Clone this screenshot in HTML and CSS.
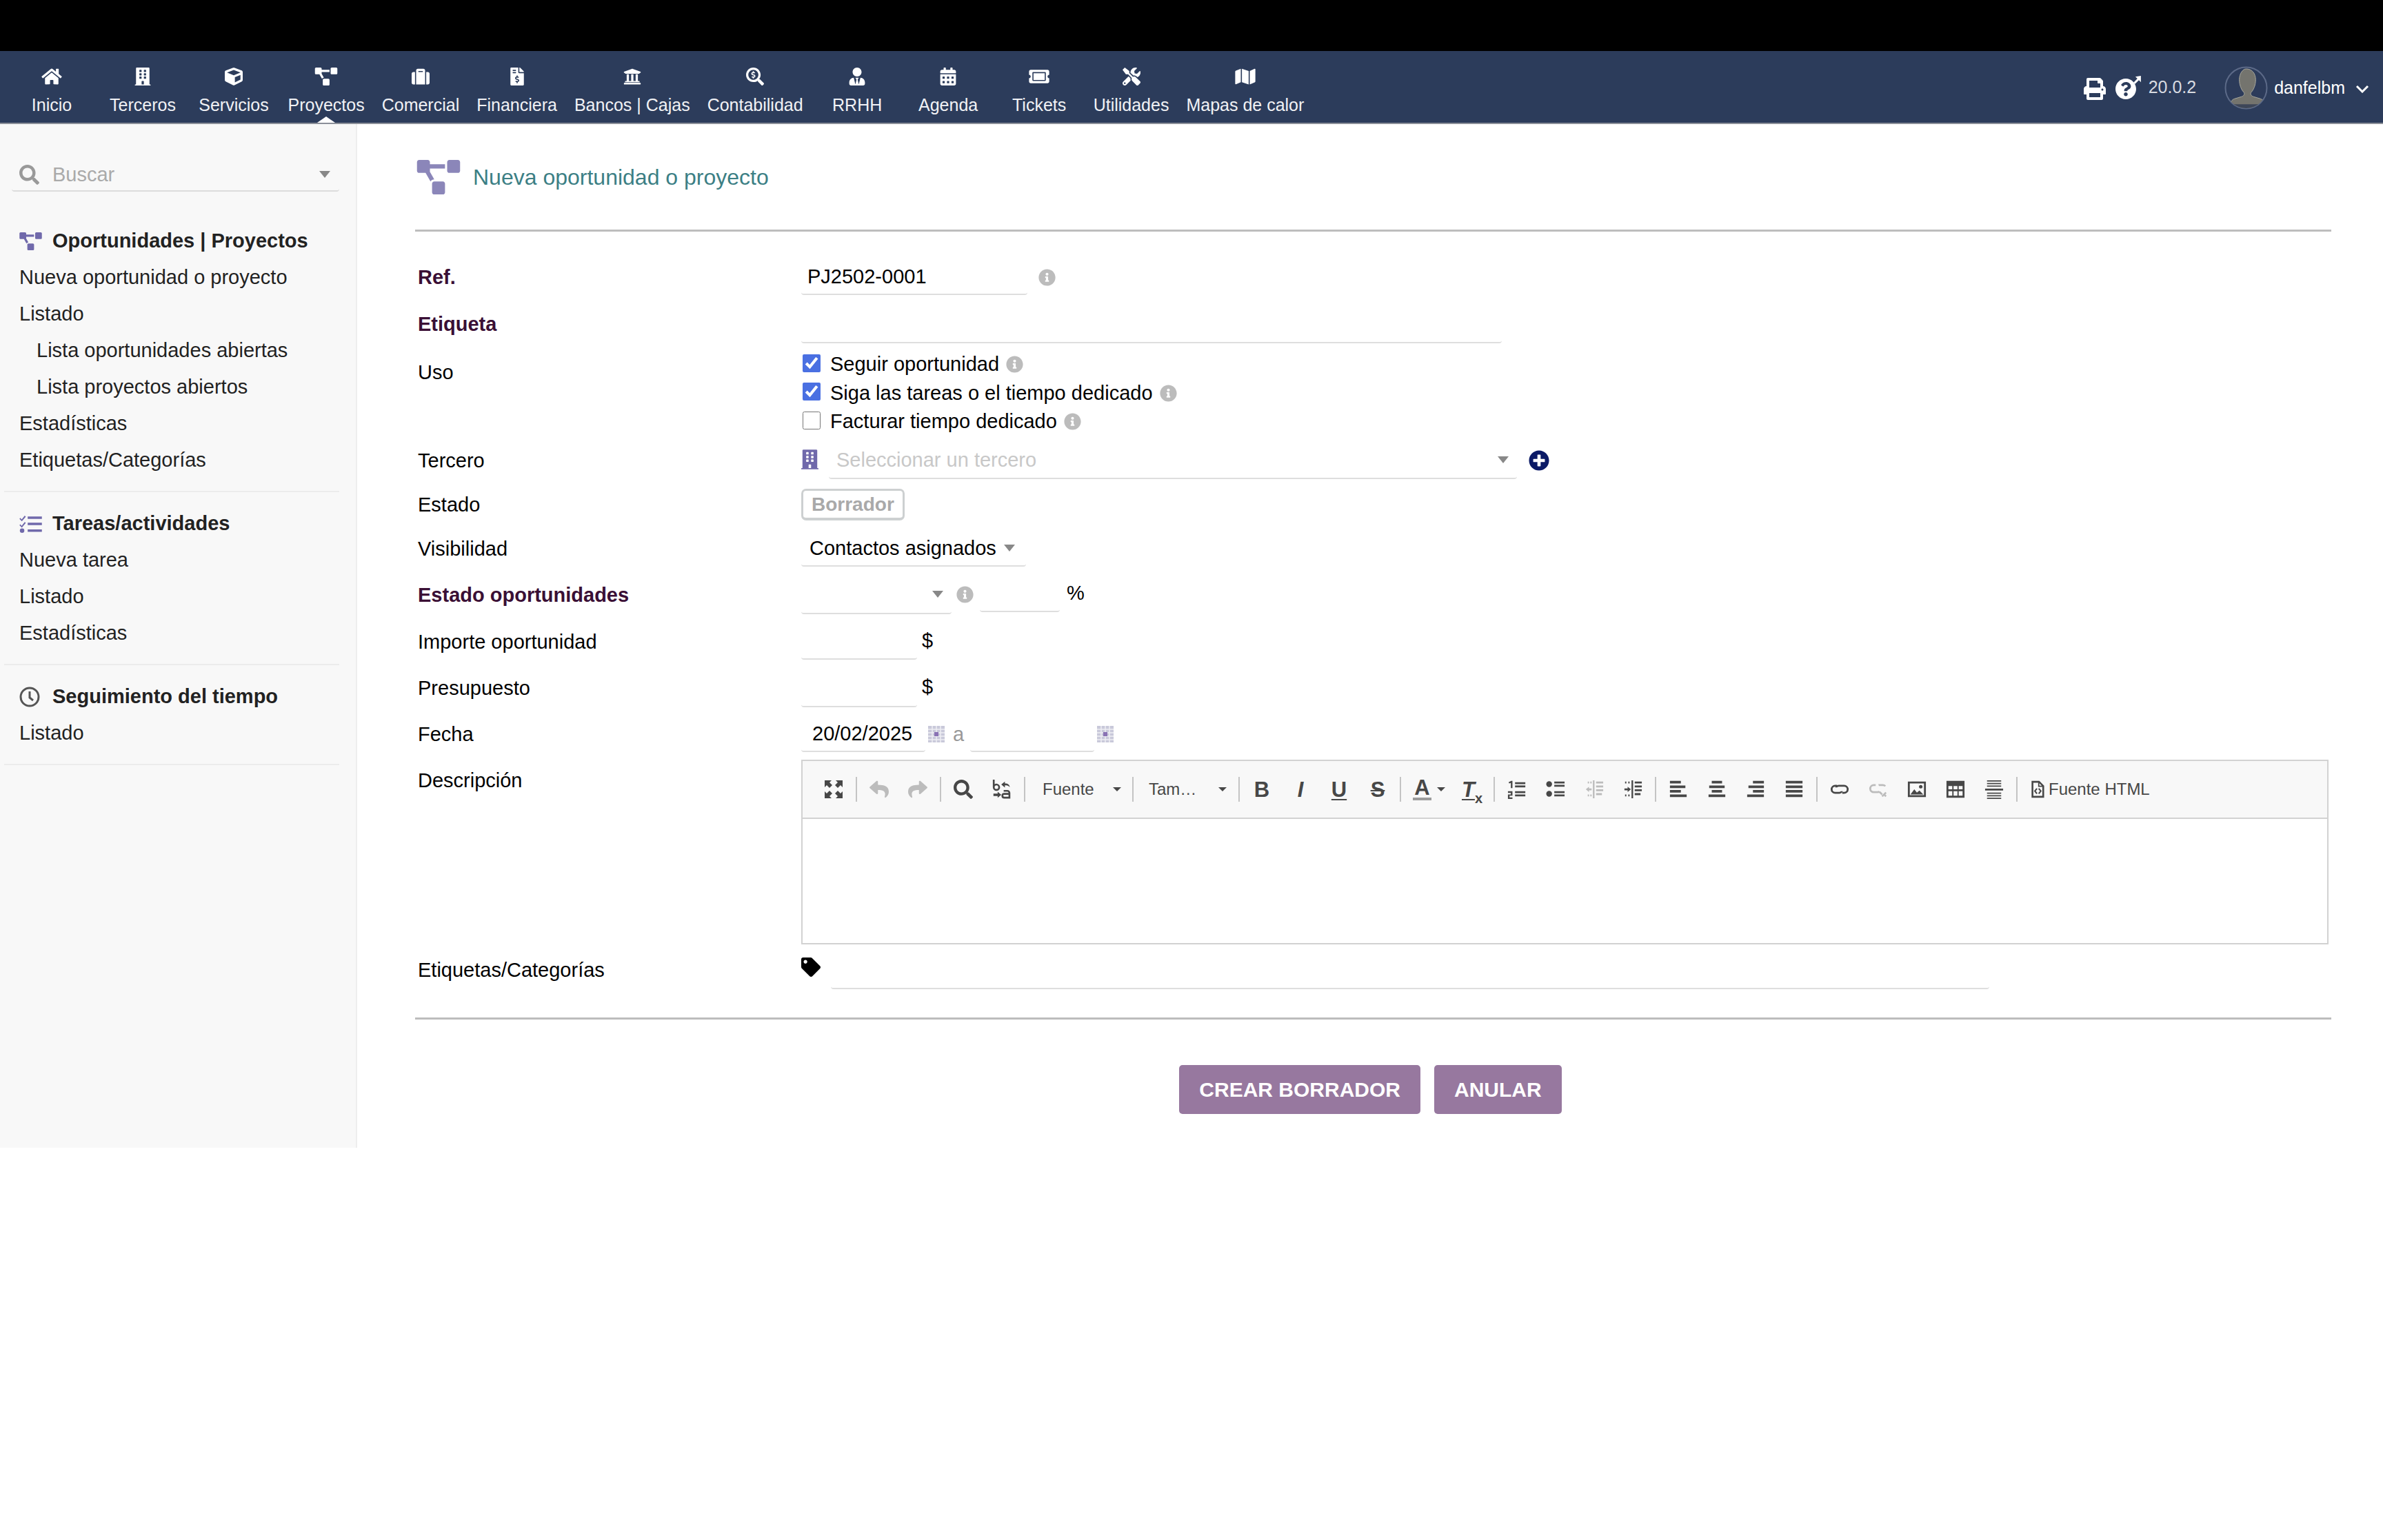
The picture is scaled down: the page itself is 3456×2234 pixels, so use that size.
FILE: index.html
```html
<!DOCTYPE html>
<html lang="es">
<head>
<meta charset="utf-8">
<title>Nueva oportunidad o proyecto</title>
<link rel="stylesheet" href="styles.css">
</head>
<body>
<svg class="sprite" aria-hidden="true">
  <symbol id="home" viewBox="0 0 576 512"><path d="M280.37 148.26L96 300.11V464a16 16 0 0 0 16 16l112.06-.29a16 16 0 0 0 15.92-16V368a16 16 0 0 1 16-16h64a16 16 0 0 1 16 16v95.64a16 16 0 0 0 16 16.05L464 480a16 16 0 0 0 16-16V300L295.67 148.26a12.19 12.19 0 0 0-15.3 0zM571.6 251.47L488 182.56V44.05a12 12 0 0 0-12-12h-56a12 12 0 0 0-12 12v72.61L318.47 43a48 48 0 0 0-61 0L4.34 251.47a12 12 0 0 0-1.6 16.9l25.5 31A12 12 0 0 0 45.15 301l235.22-193.74a12.19 12.19 0 0 1 15.3 0L530.9 301a12 12 0 0 0 16.9-1.6l25.5-31a12 12 0 0 0-1.7-16.93z"/></symbol>
  <symbol id="building" viewBox="0 0 448 512"><path d="M436 480h-20V24c0-13.255-10.745-24-24-24H56C42.745 0 32 10.745 32 24v456H12c-6.627 0-12 5.373-12 12v20h448v-20c0-6.627-5.373-12-12-12zM128 76c0-6.627 5.373-12 12-12h40c6.627 0 12 5.373 12 12v40c0 6.627-5.373 12-12 12h-40c-6.627 0-12-5.373-12-12V76zm0 96c0-6.627 5.373-12 12-12h40c6.627 0 12 5.373 12 12v40c0 6.627-5.373 12-12 12h-40c-6.627 0-12-5.373-12-12v-40zm52 148h-40c-6.627 0-12-5.373-12-12v-40c0-6.627 5.373-12 12-12h40c6.627 0 12 5.373 12 12v40c0 6.627-5.373 12-12 12zm76 160h-64v-84c0-6.627 5.373-12 12-12h40c6.627 0 12 5.373 12 12v84zm64-172c0 6.627-5.373 12-12 12h-40c-6.627 0-12-5.373-12-12v-40c0-6.627 5.373-12 12-12h40c6.627 0 12 5.373 12 12v40zm0-96c0 6.627-5.373 12-12 12h-40c-6.627 0-12-5.373-12-12v-40c0-6.627 5.373-12 12-12h40c6.627 0 12 5.373 12 12v40zm0-96c0 6.627-5.373 12-12 12h-40c-6.627 0-12-5.373-12-12V76c0-6.627 5.373-12 12-12h40c6.627 0 12 5.373 12 12v40z"/></symbol>
  <symbol id="cube" viewBox="0 0 512 512"><path d="M239.1 6.3l-208 78c-18.7 7-31.1 25-31.1 45v225.1c0 18.2 10.3 34.8 26.5 42.9l208 104c13.5 6.8 29.4 6.8 42.9 0l208-104c16.3-8.1 26.5-24.8 26.5-42.9V129.3c0-20-12.4-37.9-31.1-44.9l-208-78C262 2.2 250 2.2 239.1 6.3zM256 68.4l192 72v1.1l-192 78-192-78v-1.1l192-72zm32 356V275.5l160-65v133.9l-160 80z"/></symbol>
  <symbol id="project" viewBox="0 0 640 512"><path d="M384 320H256c-17.67 0-32 14.33-32 32v128c0 17.67 14.33 32 32 32h128c17.67 0 32-14.33 32-32V352c0-17.67-14.33-32-32-32zM192 32c0-17.67-14.33-32-32-32H32C14.33 0 0 14.33 0 32v128c0 17.67 14.33 32 32 32h95.72l73.16 128.04C211.98 300.98 232.4 288 256 288h.28L192 175.51V128h224V64H192V32zM608 0H480c-17.67 0-32 14.33-32 32v128c0 17.67 14.33 32 32 32h128c17.67 0 32-14.33 32-32V32c0-17.67-14.33-32-32-32z"/></symbol>
  <symbol id="suitcase" viewBox="0 0 512 512"><path d="M128 480h256V80c0-26.5-21.5-48-48-48H176c-26.5 0-48 21.5-48 48v400zm64-384h128v32H192V96zm320 80v256c0 26.5-21.5 48-48 48h-48V128h48c26.5 0 48 21.5 48 48zM96 480H48c-26.5 0-48-21.5-48-48V176c0-26.5 21.5-48 48-48h48v352z"/></symbol>
  <symbol id="invoice" viewBox="0 0 384 512"><path d="M377 105L279.1 7c-4.5-4.5-10.6-7-17-7H256v128h128v-6.1c0-6.3-2.5-12.4-7-16.9zm-153 31V0H24C10.7 0 0 10.7 0 24v464c0 13.3 10.7 24 24 24h336c13.3 0 24-10.7 24-24V160H248c-13.2 0-24-10.8-24-24zM64 72c0-4.42 3.58-8 8-8h80c4.42 0 8 3.58 8 8v16c0 4.42-3.58 8-8 8H72c-4.42 0-8-3.58-8-8V72zm0 80v-16c0-4.42 3.58-8 8-8h80c4.42 0 8 3.58 8 8v16c0 4.42-3.58 8-8 8H72c-4.42 0-8-3.58-8-8zm144 263.88V440c0 4.42-3.58 8-8 8h-16c-4.42 0-8-3.58-8-8v-24.29c-11.29-.58-22.27-4.52-31.37-11.35-3.9-2.93-4.1-8.77-.57-12.14l11.75-11.21c2.77-2.64 6.89-2.76 10.13-.73 3.87 2.42 8.26 3.72 12.82 3.72h28.11c6.5 0 11.8-5.92 11.8-13.19 0-5.95-3.61-11.19-8.77-12.73l-45-13.5c-18.59-5.58-31.58-23.42-31.58-43.39 0-24.52 19.05-44.44 42.67-45.07V232c0-4.42 3.58-8 8-8h16c4.42 0 8 3.58 8 8v24.29c11.29.58 22.27 4.51 31.37 11.35 3.9 2.93 4.1 8.77.57 12.14l-11.75 11.21c-2.77 2.64-6.89 2.76-10.13.73-3.87-2.43-8.26-3.72-12.82-3.72h-28.11c-6.5 0-11.8 5.92-11.8 13.19 0 5.95 3.61 11.19 8.77 12.73l45 13.5c18.59 5.58 31.58 23.42 31.58 43.39 0 24.53-19.05 44.44-42.67 45.07z"/></symbol>
  <symbol id="bank" viewBox="0 0 512 512"><path d="M496 128v16a8 8 0 0 1-8 8h-24v12c0 6.627-5.373 12-12 12H60c-6.627 0-12-5.373-12-12v-12H24a8 8 0 0 1-8-8v-16a8 8 0 0 1 4.941-7.392l232-88a7.996 7.996 0 0 1 6.118 0l232 88A8 8 0 0 1 496 128zm-24 304H40c-13.255 0-24 10.745-24 24v16a8 8 0 0 0 8 8h464a8 8 0 0 0 8-8v-16c0-13.255-10.745-24-24-24zM96 192v192H60c-6.627 0-12 5.373-12 12v20h416v-20c0-6.627-5.373-12-12-12h-36V192h-64v192h-64V192h-64v192h-64V192H96z"/></symbol>
  <symbol id="search-dollar" viewBox="0 0 512 512"><path d="M505.04 442.66l-99.71-99.69c-4.5-4.5-10.6-7-17-7h-16.3c27.6-35.3 44-79.69 44-127.99C416.03 93.09 322.92 0 208.02 0S0 93.09 0 207.98s93.11 207.98 208.02 207.98c48.3 0 92.71-16.4 128.01-44v16.3c0 6.4 2.5 12.5 7 17l99.71 99.69c9.4 9.4 24.6 9.4 33.9 0l28.3-28.3c9.4-9.4 9.4-24.6.1-34zM208.02 351.97c-79.54 0-144-64.34-144-143.98 0-79.53 64.35-143.98 144-143.98 79.54 0 144 64.34 144 143.98 0 79.53-64.35 143.98-144 143.98zm27.11-152.54l-45.01-13.5c-5.16-1.55-8.77-6.78-8.77-12.73 0-7.27 5.3-13.19 11.8-13.19h28.11c4.56 0 8.96 1.29 12.82 3.72 3.24 2.03 7.36 1.91 10.13-.73l11.75-11.21c3.53-3.37 3.33-9.21-.57-12.14-9.1-6.83-20.08-10.77-31.37-11.35V112c0-4.42-3.58-8-8-8h-16c-4.42 0-8 3.58-8 8v16.12c-23.63.63-42.68 20.55-42.68 45.07 0 19.97 12.99 37.81 31.58 43.39l45.01 13.5c5.16 1.55 8.77 6.78 8.77 12.73 0 7.27-5.3 13.19-11.8 13.19h-28.1c-4.56 0-8.96-1.29-12.82-3.72-3.24-2.03-7.36-1.9-10.13.73l-11.75 11.21c-3.53 3.37-3.33 9.21.57 12.14 9.1 6.83 20.08 10.77 31.37 11.35V304c0 4.42 3.58 8 8 8h16c4.42 0 8-3.58 8-8v-16.12c23.63-.63 42.68-20.54 42.68-45.07 0-19.97-12.99-37.81-31.59-43.38z"/></symbol>
  <symbol id="usertie" viewBox="0 0 448 512"><path d="M224 256c70.7 0 128-57.3 128-128S294.7 0 224 0 96 57.3 96 128s57.3 128 128 128zm95.8 32.6L272 480l-32-136 32-56h-96l32 56-32 136-47.8-191.4C56.9 292 0 350.3 0 422.4V464c0 26.5 21.5 48 48 48h352c26.5 0 48-21.5 48-48v-41.6c0-72.1-56.9-130.4-128.2-133.8z"/></symbol>
  <symbol id="calendar" viewBox="0 0 448 512"><path d="M0 464c0 26.5 21.5 48 48 48h352c26.5 0 48-21.5 48-48V192H0v272zm320-196c0-6.6 5.4-12 12-12h40c6.6 0 12 5.4 12 12v40c0 6.6-5.4 12-12 12h-40c-6.6 0-12-5.4-12-12v-40zm0 128c0-6.6 5.4-12 12-12h40c6.6 0 12 5.4 12 12v40c0 6.6-5.4 12-12 12h-40c-6.6 0-12-5.4-12-12v-40zM192 268c0-6.6 5.4-12 12-12h40c6.6 0 12 5.4 12 12v40c0 6.6-5.4 12-12 12h-40c-6.6 0-12-5.4-12-12v-40zm0 128c0-6.6 5.4-12 12-12h40c6.6 0 12 5.4 12 12v40c0 6.6-5.4 12-12 12h-40c-6.6 0-12-5.4-12-12v-40zM64 268c0-6.6 5.4-12 12-12h40c6.6 0 12 5.4 12 12v40c0 6.6-5.4 12-12 12H76c-6.6 0-12-5.4-12-12v-40zm0 128c0-6.6 5.4-12 12-12h40c6.6 0 12 5.4 12 12v40c0 6.6-5.4 12-12 12H76c-6.6 0-12-5.4-12-12v-40zM400 64h-48V16c0-8.8-7.2-16-16-16h-32c-8.8 0-16 7.2-16 16v48H160V16c0-8.8-7.2-16-16-16h-32c-8.8 0-16 7.2-16 16v48H48C21.5 64 0 85.5 0 112v48h448v-48c0-26.5-21.5-48-48-48z"/></symbol>
  <symbol id="ticket" viewBox="0 0 576 512"><path d="M128 160h320v192H128V160zm400 96c0 26.51 21.49 48 48 48v96c0 26.51-21.49 48-48 48H48c-26.51 0-48-21.49-48-48v-96c26.51 0 48-21.49 48-48s-21.49-48-48-48v-96c0-26.51 21.49-48 48-48h480c26.51 0 48 21.49 48 48v96c-26.51 0-48 21.49-48 48zm-48-104c0-13.255-10.745-24-24-24H120c-13.255 0-24 10.745-24 24v208c0 13.255 10.745 24 24 24h336c13.255 0 24-10.745 24-24V152z"/></symbol>
  <symbol id="tools" viewBox="0 0 512 512"><path d="M501.1 395.7L384 278.6c-23.1-23.1-57.6-27.6-85.4-13.9L192 158.1V96L64 0 0 64l96 128h62.1l106.6 106.6c-13.6 27.8-9.2 62.3 13.9 85.4l117.1 117.1c14.6 14.6 38.2 14.6 52.7 0l52.7-52.7c14.5-14.6 14.5-38.2 0-52.7zM331.7 225c28.3 0 54.9 11 74.9 31l19.4 19.4c15.8-6.9 30.8-16.5 43.8-29.5 37.1-37.1 49.7-89.3 37.9-136.7-2.2-9-13.5-12.1-20.1-5.5l-74.4 74.4-67.9-11.3L334 98.9l74.4-74.4c6.6-6.6 3.4-17.9-5.7-20.2-47.4-11.7-99.6.9-136.6 37.9-28.5 28.5-41.9 66.1-41.2 103.6l82.1 82.1c8.1-1.9 16.5-2.9 24.7-2.9zm-103.9 82l-56.7-56.7L18.7 402.8c-25 25-25 65.5 0 90.5s65.5 25 90.5 0l123.6-123.6c-7.6-19.9-9.9-41.6-5-62.7zM64 472c-13.2 0-24-10.8-24-24 0-13.3 10.7-24 24-24s24 10.7 24 24c0 13.2-10.7 24-24 24z"/></symbol>
  <symbol id="map" viewBox="0 0 576 512"><path d="M0 117.66v346.32c0 11.32 11.43 19.06 21.94 14.86L160 416V32L20.12 87.95A32.006 32.006 0 0 0 0 117.66zM192 416l192 64V96L192 32v384zM554.06 33.16L416 96v384l139.88-55.95A31.996 31.996 0 0 0 576 394.34V48.02c0-11.32-11.43-19.06-21.94-14.86z"/></symbol>
  <symbol id="print" viewBox="0 0 512 512"><path d="M448 192V77.25c0-8.49-3.37-16.62-9.37-22.63L393.37 9.37c-6-6-14.14-9.37-22.63-9.37H96C78.33 0 64 14.33 64 32v160c-35.35 0-64 28.65-64 64v112c0 8.84 7.16 16 16 16h48v96c0 17.67 14.33 32 32 32h320c17.67 0 32-14.33 32-32v-96h48c8.84 0 16-7.16 16-16V256c0-35.35-28.65-64-64-64zm-64 256H128v-96h256v96zm0-224H128V64h192v48c0 8.84 7.16 16 16 16h48v96zm48 72c-13.25 0-24-10.75-24-24 0-13.26 10.75-24 24-24s24 10.74 24 24c0 13.25-10.75 24-24 24z"/></symbol>
  <symbol id="help" viewBox="0 0 612 576"><g transform="translate(-8 56)"><path d="M504 256c0 136.997-111.043 248-248 248S8 392.997 8 256C8 119.083 119.043 8 256 8s248 111.083 248 248zM262.655 90c-54.497 0-89.255 22.957-116.549 63.758-3.536 5.286-2.353 12.415 2.715 16.258l34.699 26.31c5.205 3.947 12.621 3.008 16.665-2.122 17.864-22.658 30.113-35.797 57.303-35.797 20.429 0 45.698 13.148 45.698 32.958 0 14.976-12.363 22.667-32.534 33.976C247.128 238.528 216 254.941 216 296v4c0 6.627 5.373 12 12 12h56c6.627 0 12-5.373 12-12v-1.333c0-28.462 83.186-29.647 83.186-106.667 0-58.002-60.165-102-116.531-102zM256 338c-25.365 0-46 20.635-46 46 0 25.364 20.635 46 46 46s46-20.636 46-46c0-25.365-20.635-46-46-46z"/></g><path d="M610 0v150l-48-48-92 92-36-36 92-92-48-48z"/></symbol>
  <symbol id="search" viewBox="0 0 512 512"><path d="M505 442.7L405.3 343c-4.5-4.5-10.6-7-17-7H372c27.6-35.3 44-79.7 44-128C416 93.1 322.9 0 208 0S0 93.1 0 208s93.1 208 208 208c48.3 0 92.7-16.4 128-44v16.3c0 6.4 2.5 12.5 7 17l99.7 99.7c9.4 9.4 24.6 9.4 33.9 0l28.3-28.3c9.4-9.4 9.4-24.6.1-34zM208 336c-70.7 0-128-57.2-128-128 0-70.7 57.2-128 128-128 70.7 0 128 57.2 128 128 0 70.7-57.2 128-128 128z"/></symbol>
  <symbol id="info" viewBox="0 0 512 512"><path d="M256 8C119.043 8 8 119.083 8 256c0 136.997 111.043 248 248 248s248-111.003 248-248C504 119.083 392.957 8 256 8zm0 110c23.196 0 42 18.804 42 42s-18.804 42-42 42-42-18.804-42-42 18.804-42 42-42zm56 254c0 6.627-5.373 12-12 12h-88c-6.627 0-12-5.373-12-12v-24c0-6.627 5.373-12 12-12h12v-64h-12c-6.627 0-12-5.373-12-12v-24c0-6.627 5.373-12 12-12h64c6.627 0 12 5.373 12 12v100h12c6.627 0 12 5.373 12 12v24z"/></symbol>
  <symbol id="plus" viewBox="0 0 512 512"><path d="M256 8C119 8 8 119 8 256s111 248 248 248 248-111 248-248S393 8 256 8zm144 276c0 6.6-5.4 12-12 12h-92v92c0 6.6-5.4 12-12 12h-56c-6.6 0-12-5.4-12-12v-92h-92c-6.6 0-12-5.4-12-12v-56c0-6.6 5.4-12 12-12h92v-92c0-6.6 5.4-12 12-12h56c6.6 0 12 5.4 12 12v92h92c6.6 0 12 5.4 12 12v56z"/></symbol>
  <symbol id="tag" viewBox="0 0 512 512"><path d="M0 252.118V48C0 21.49 21.49 0 48 0h204.118a48 48 0 0 1 33.941 14.059l211.882 211.882c18.745 18.745 18.745 49.137 0 67.882L293.823 497.941c-18.745 18.745-49.137 18.745-67.882 0L14.059 286.059A48 48 0 0 1 0 252.118zM112 64c-26.51 0-48 21.49-48 48s21.49 48 48 48 48-21.49 48-48-21.49-48-48-48z"/></symbol>
  <symbol id="reply" viewBox="0 0 512 512"><path d="M8.309 189.836L184.313 37.851C199.719 24.546 224 35.347 224 56.015v80.053c160.629 1.839 288 34.032 288 186.258 0 61.441-39.581 122.309-83.333 154.132-13.653 9.931-33.111-2.533-28.077-18.631 45.344-145.012-21.507-183.51-176.59-185.742V360c0 20.7-24.3 31.453-39.687 18.164l-176-152c-11.071-9.562-11.086-26.753 0-36.328z"/></symbol>
  <symbol id="tasks" viewBox="0 0 30 24"><path d="M1 4l2 2 4-5 1.500 1.200L3.200 8.500 0 5.300zM1 12.500l2 2 4-5 1.500 1.200-5.300 6.300L0 13.800z"/><circle cx="3.500" cy="21" r="3"/><path d="M11 2h19v3.400H11zM11 10.300h19v3.400H11zM11 19.300h19v3.400H11z"/></symbol>
  <symbol id="calgrid" viewBox="0 0 24 24"><rect width="24" height="24" fill="#c9c9da"/><path d="M0 5h24M0 10h24M0 15h24M0 20h24M6 0v24M12 0v24M18 0v24" stroke="#eeeef4" stroke-width="1.500"/><rect x="9" y="9" width="6" height="6" fill="#8a72b4"/></symbol>
  <symbol id="maximize" viewBox="0 0 28 28"><g id="maxa"><path d="M1 1h10l-3 3 4 4-4 4-4-4-3 3z"/></g><path d="M27 1v10l-3-3-4 4-4-4 4-4-3-3zM1 27V17l3 3 4-4 4 4-4 4 3 3zM27 27H17l3-3-4-4 4-4 4 4 3-3z"/></symbol>
  <symbol id="replace" viewBox="0 0 32 32"><path d="M1 0h3v7.500A6 6 0 1 1 1 12.500zM4 12.500a3 3 0 1 0 6 0 3 3 0 1 0-6 0z" fill-rule="evenodd"/><path d="M15 8l6-5v3.200c5 0 8 2.300 8 6.300-2-2.500-4.500-3-8-3V13zM2 23h7v-3l6 5-6 5v-3H2z"/><path d="M19 17h6a5 5 0 0 1 5 5v9.500H20a4.700 4.700 0 0 1 0-9.400h7V22a2 2 0 0 0-2-2h-6zM20 25a1.700 1.700 0 0 0 0 3.400h7V25z" fill-rule="evenodd"/></symbol>
  <symbol id="ol" viewBox="0 0 30 30"><path d="M2 4l4-2h2v11H5.500V5L3 6zM12 4h16v3H12zM12 8h16v0zM1 18h7v7H3.500v2.500H8V30H1v-7h4.500v-2.500H1zM12 18h16v3H12zM12 23h16v3H12z"/><path d="M12 9h16v3H12z"/></symbol>
  <symbol id="ul" viewBox="0 0 30 30"><circle cx="5" cy="7" r="4.500"/><circle cx="5" cy="22" r="4.500"/><path d="M13 3h16v3H13zM13 8h16v3H13zM13 18h16v3H13zM13 23h16v3H13z"/></symbol>
  <symbol id="outdent" viewBox="0 0 30 30"><path d="M13 1h2.500v28H13zM18 3h11v3H18zM18 9h11v3H18zM18 15h11v3H18zM18 21h9v3h-9zM2 15l5-4v2.700h4v3H7v2.500zM5 3h2v3H5zM9 3h2v3H9zM5 23h2v3H5zM9 23h2v3H9z"/></symbol>
  <symbol id="indent" viewBox="0 0 30 30"><path d="M13 1h2.500v28H13zM18 3h11v3H18zM18 9h11v3H18zM18 15h11v3H18zM18 21h9v3h-9zM12 15l-5-4v2.700H2v3h5v2.500zM3 3h2v3H3zM8 3h2v3H8zM3 23h2v3H3zM8 23h2v3H8z"/></symbol>
  <symbol id="alleft" viewBox="0 0 30 30"><path d="M2 2h17v4H2zM2 9h24v4H2zM2 16h17v4H2zM2 23h26v4H2z"/></symbol>
  <symbol id="alcenter" viewBox="0 0 30 30"><path d="M7 2h16v4H7zM3 9h24v4H3zM7 16h16v4H7zM2 23h26v4H2z"/></symbol>
  <symbol id="alright" viewBox="0 0 30 30"><path d="M11 2h17v4H11zM4 9h24v4H4zM11 16h17v4H11zM2 23h26v4H2z"/></symbol>
  <symbol id="justify" viewBox="0 0 30 30"><path d="M2 2h26v4H2zM2 9h26v4H2zM2 16h26v4H2zM2 23h26v4H2z"/></symbol>
  <symbol id="link" viewBox="0 0 30 30"><path d="M11 8H8a7 7 0 0 0 0 14h6a7 7 0 0 0 6-4h-3a4 4 0 0 1-3 1H8a4 4 0 0 1 0-8h3zM19 8h-5a7 7 0 0 0-6 4h3a4 4 0 0 1 3-1h8a4 4 0 0 1 0 8h-3v3h3a7 7 0 0 0 0-14z"/></symbol>
  <symbol id="unlink" viewBox="0 0 30 30"><path d="M11 7H8a7 7 0 0 0 0 14h6a7 7 0 0 0 4-1.500L16 17.500a4 4 0 0 1-2 .5H8a4 4 0 0 1 0-8h3zM15 7h7a7 7 0 0 1 5 2l-2 2a4 4 0 0 0-3-1h-6zM16 20l4 4 2-2-4-4zM26 19l2 2-2 2 2 2-2 2-2-2-2 2-2-2 2-2z"/></symbol>
  <symbol id="image" viewBox="0 0 30 30"><path d="M1 3h28v24H1zM4 6v18h22V6z" fill-rule="evenodd"/><path d="M5 23l6-8 4 5 4-3 6 6z"/><circle cx="21" cy="11" r="2.700"/></symbol>
  <symbol id="table" viewBox="0 0 30 30"><path d="M1 2h28v26H1zM4 10v5h6v-5zM12 10v5h6v-5zM20 10v5h6v-5zM4 18v7h6v-7zM12 18v7h6v-7zM20 18v7h6v-7z" fill-rule="evenodd"/></symbol>
  <symbol id="hrule" viewBox="0 0 30 30"><path d="M4 1h22v2H4zM4 5h22v2H4zM4 9h22v2H4zM1 14h28v3H1zM4 20h22v2H4zM4 24h22v2H4zM4 28h22v2H4z"/></symbol>
  <symbol id="source" viewBox="0 0 30 30"><path d="M5 1h13l8 8v20H5zM8 4v22h15V11h-7V4zM18 5v4h4z" fill-rule="evenodd"/><path d="M13 13l2 1.500-3 3.500 3 3.500-2 1.500-4-5zM18 13l-2 1.500 3 3.500-3 3.500 2 1.500 4-5z"/></symbol>
</svg>

<div class="topbar"></div>
<nav class="nav">
  <a class="nav-item"><svg class="nav-ic"><use href="#home"/></svg><span>Inicio</span></a>
  <a class="nav-item"><svg class="nav-ic"><use href="#building"/></svg><span>Terceros</span></a>
  <a class="nav-item"><svg class="nav-ic"><use href="#cube"/></svg><span>Servicios</span></a>
  <a class="nav-item is-active"><svg class="nav-ic"><use href="#project"/></svg><span>Proyectos</span></a>
  <a class="nav-item"><svg class="nav-ic"><use href="#suitcase"/></svg><span>Comercial</span></a>
  <a class="nav-item"><svg class="nav-ic"><use href="#invoice"/></svg><span>Financiera</span></a>
  <a class="nav-item"><svg class="nav-ic"><use href="#bank"/></svg><span>Bancos | Cajas</span></a>
  <a class="nav-item"><svg class="nav-ic"><use href="#search-dollar"/></svg><span>Contabilidad</span></a>
  <a class="nav-item"><svg class="nav-ic"><use href="#usertie"/></svg><span>RRHH</span></a>
  <a class="nav-item"><svg class="nav-ic"><use href="#calendar"/></svg><span>Agenda</span></a>
  <a class="nav-item"><svg class="nav-ic"><use href="#ticket"/></svg><span>Tickets</span></a>
  <a class="nav-item"><svg class="nav-ic"><use href="#tools"/></svg><span>Utilidades</span></a>
  <a class="nav-item"><svg class="nav-ic"><use href="#map"/></svg><span>Mapas de calor</span></a>
  <div class="nav-right">
    <svg class="ic-print"><use href="#print"/></svg>
    <svg class="ic-help"><use href="#help"/></svg>
    <span class="version">20.0.2</span>
    <svg class="avatar" viewBox="0 0 64 64">
      <defs><clipPath id="avclip"><circle cx="32" cy="32" r="30"/></clipPath></defs>
      <circle cx="32" cy="32" r="30.500" fill="#2c3b5a" stroke="#5c6a88" stroke-width="2"/>
      <g clip-path="url(#avclip)">
        <path d="M32 4c9 0 14 7 14 16 0 8-3 15-7 19-1 3 1 5 4 6l10 3c4 1 6 5 7 10v4H8v-4c1-5 3-9 7-10l10-3c3-1 5-3 4-6-4-4-7-11-7-19 0-9 5-16 10-16z" fill="#74746e" stroke="#a9a9a0" stroke-width="1"/>
        <path d="M4 56h56v8H4z" fill="#3d4658"/>
      </g>
    </svg>
    <span class="username">danfelbm</span>
    <svg class="chev" viewBox="0 0 20 12"><path d="M2 2l8 8 8-8" fill="none" stroke="#fff" stroke-width="3"/></svg>
  </div>
</nav>

<div class="layout">
  <aside class="side">
    <div class="side-search">
      <svg class="side-search-ic"><use href="#search"/></svg>
      <span class="side-search-text">Buscar</span>
      <span class="caret"></span>
    </div>

    <section class="side-group">
      <div class="side-head"><svg class="side-ic side-ic-violet"><use href="#project"/></svg>Oportunidades | Proyectos</div>
      <a class="side-link">Nueva oportunidad o proyecto</a>
      <a class="side-link">Listado</a>
      <a class="side-link side-sub">Lista oportunidades abiertas</a>
      <a class="side-link side-sub">Lista proyectos abiertos</a>
      <a class="side-link">Estadísticas</a>
      <a class="side-link">Etiquetas/Categorías</a>
    </section>

    <section class="side-group">
      <div class="side-head"><svg class="side-ic side-ic-violet"><use href="#tasks"/></svg>Tareas/actividades</div>
      <a class="side-link">Nueva tarea</a>
      <a class="side-link">Listado</a>
      <a class="side-link">Estadísticas</a>
    </section>

    <section class="side-group">
      <div class="side-head"><svg class="side-ic side-clock" viewBox="0 0 30 30"><circle cx="15" cy="15" r="13" fill="none" stroke="#555" stroke-width="3"/><path d="M15 7v9l5 4" fill="none" stroke="#555" stroke-width="3"/></svg>Seguimiento del tiempo</div>
      <a class="side-link">Listado</a>
    </section>
  </aside>

  <main class="main">
    <div class="title-row">
      <svg class="title-ic"><use href="#project"/></svg>
      <h1 class="title">Nueva oportunidad o proyecto</h1>
    </div>

    <form class="form">
      <div class="row h68">
        <label class="lab lab-req">Ref.</label>
        <div class="val"><input class="field w328 pad10" value="PJ2502-0001"><svg class="info info-ref"><use href="#info"/></svg></div>
      </div>
      <div class="row h68">
        <label class="lab lab-req">Etiqueta</label>
        <div class="val"><input class="field tall w1016"></div>
      </div>
      <div class="row h128">
        <label class="lab lab-top-uso">Uso</label>
        <div class="checks">
          <label class="check"><input type="checkbox" checked>Seguir oportunidad<svg class="info"><use href="#info"/></svg></label>
          <label class="check"><input type="checkbox" checked>Siga las tareas o el tiempo dedicado<svg class="info"><use href="#info"/></svg></label>
          <label class="check"><input type="checkbox">Facturar tiempo dedicado<svg class="info"><use href="#info"/></svg></label>
        </div>
      </div>
      <div class="row h72">
        <label class="lab">Tercero</label>
        <div class="val">
          <svg class="ic-third"><use href="#building"/></svg>
          <div class="field mid w998 select-third"><span class="ph">Seleccionar un tercero</span><span class="caret caret-end"></span></div>
          <svg class="ic-plus"><use href="#plus"/></svg>
        </div>
      </div>
      <div class="row h56">
        <label class="lab">Estado</label>
        <div class="val"><span class="badge">Borrador</span></div>
      </div>
      <div class="row h72">
        <label class="lab">Visibilidad</label>
        <div class="val"><div class="field w326 select-vis">Contactos asignados<span class="caret caret-vis"></span></div></div>
      </div>
      <div class="row h62">
        <label class="lab lab-req">Estado oportunidades</label>
        <div class="val">
          <div class="field tall w218 select-op"><span class="caret caret-end"></span></div>
          <svg class="info info-op"><use href="#info"/></svg>
          <input class="field w116 pct-input">
          <span class="unit unit-pct">%</span>
        </div>
      </div>
      <div class="row h74">
        <label class="lab">Importe oportunidad</label>
        <div class="val"><input class="field w168"><span class="unit">$</span></div>
      </div>
      <div class="row h60">
        <label class="lab">Presupuesto</label>
        <div class="val"><input class="field tall w168"><span class="unit">$</span></div>
      </div>
      <div class="row h74">
        <label class="lab">Fecha</label>
        <div class="val">
          <input class="field w180 pad16" value="20/02/2025">
          <svg class="ic-cal"><use href="#calgrid"/></svg>
          <span class="date-a">a</span>
          <input class="field w180">
          <svg class="ic-cal"><use href="#calgrid"/></svg>
        </div>
      </div>
      <div class="row h268">
        <label class="lab lab-top-desc">Descripción</label>
        <div class="editor">
          <div class="toolbar">
            <span class="tb"><svg class="tb-ic"><use href="#maximize"/></svg></span>
            <i class="tb-sep"></i>
            <span class="tb tb-off"><svg class="tb-ic"><use href="#reply"/></svg></span>
            <span class="tb tb-off"><svg class="tb-ic tb-flip"><use href="#reply"/></svg></span>
            <i class="tb-sep"></i>
            <span class="tb"><svg class="tb-ic"><use href="#search"/></svg></span>
            <span class="tb"><svg class="tb-ic"><use href="#replace"/></svg></span>
            <i class="tb-sep"></i>
            <span class="tb-combo tb-combo-font">Fuente<span class="tb-caret"></span></span>
            <i class="tb-sep"></i>
            <span class="tb-combo tb-combo-size">Tam…<span class="tb-caret"></span></span>
            <i class="tb-sep"></i>
            <span class="tb tb-b">B</span>
            <span class="tb tb-i">I</span>
            <span class="tb tb-u">U</span>
            <span class="tb tb-s">S</span>
            <i class="tb-sep"></i>
            <span class="tb-color"><span class="tb-a">A</span><span class="tb-caret tb-caret-a"></span></span>
            <span class="tb tb-tx"><span class="tb-t">T</span><span class="tb-x">x</span></span>
            <i class="tb-sep"></i>
            <span class="tb"><svg class="tb-ic"><use href="#ol"/></svg></span>
            <span class="tb"><svg class="tb-ic"><use href="#ul"/></svg></span>
            <span class="tb tb-off"><svg class="tb-ic"><use href="#outdent"/></svg></span>
            <span class="tb"><svg class="tb-ic"><use href="#indent"/></svg></span>
            <i class="tb-sep"></i>
            <span class="tb"><svg class="tb-ic"><use href="#alleft"/></svg></span>
            <span class="tb"><svg class="tb-ic"><use href="#alcenter"/></svg></span>
            <span class="tb"><svg class="tb-ic"><use href="#alright"/></svg></span>
            <span class="tb"><svg class="tb-ic"><use href="#justify"/></svg></span>
            <i class="tb-sep"></i>
            <span class="tb"><svg class="tb-ic"><use href="#link"/></svg></span>
            <span class="tb tb-off"><svg class="tb-ic"><use href="#unlink"/></svg></span>
            <span class="tb"><svg class="tb-ic"><use href="#image"/></svg></span>
            <span class="tb"><svg class="tb-ic"><use href="#table"/></svg></span>
            <span class="tb"><svg class="tb-ic"><use href="#hrule"/></svg></span>
            <i class="tb-sep"></i>
            <span class="tb-source"><svg class="tb-ic"><use href="#source"/></svg>Fuente HTML</span>
          </div>
          <div class="editor-body"></div>
        </div>
      </div>
      <div class="row h74">
        <label class="lab">Etiquetas/Categorías</label>
        <div class="val">
          <svg class="ic-tag"><use href="#tag"/></svg>
          <input class="field tall w1680">
        </div>
      </div>
    </form>

    <hr class="rule rule-end">

    <div class="actions">
      <button class="btn" type="button">Crear borrador</button>
      <button class="btn" type="button">Anular</button>
    </div>
  </main>
</div>
</body>
</html>
```

FILE: styles.css
```css
* { box-sizing: border-box; }
html, body { margin: 0; padding: 0; background: #fff; }
body { font-family: "Liberation Sans", Arial, sans-serif; font-size: 29px; color: #000; }
svg { flex: none; fill: currentColor; }
.sprite { display: none; }

.topbar { height: 74px; background: #000; }

.nav { height: 106px; display: flex; padding-left: 9px; padding-top: 24px; background: #2c3c5b; border-bottom: 2px solid #8b8f98; color: #f1f2f5; font-size: 25px; }
.nav-item { position: relative; min-width: 132px; padding: 0 12.500px; height: 78px; display: flex; flex-direction: column; align-items: center; }
.nav-ic { width: 34px; height: 26px; color: #fff; }
.nav-item span { margin-top: 14px; line-height: 28px; white-space: nowrap; }
.is-active::after { content: ""; position: absolute; left: 50%; bottom: -2px; margin-left: -13px; border-left: 13px solid transparent; border-right: 13px solid transparent; border-bottom: 9px solid #fff; }

.nav-right { margin-left: auto; display: flex; align-items: center; height: 63px; margin-top: -2px; padding-right: 20px; }
.ic-print { width: 32px; height: 32px; color: #fff; margin-top: 2px; }
.ic-help { width: 37px; height: 35px; color: #fff; margin-left: 14px; }
.version { margin-left: 11px; color: #d8dbe1; font-size: 25px; margin-top: -3px; }
.avatar { width: 63px; height: 63px; margin-left: 41px; }
.username { margin-left: 9px; color: #fff; font-size: 25px; }
.chev { width: 20px; height: 12px; margin-left: 15px; margin-top: 2px; }

.layout { display: flex; height: 1485px; }

.side { width: 518px; padding: 50px 24px 0 17px; background: #f8f8f8; border-right: 2px solid #eeeeee; color: #222; }
.side-search { height: 48px; display: flex; align-items: center; padding: 0 13px 0 11px; border-bottom: 2px solid #dcdcdc; border-radius: 0 0 4px 4px; color: #aaa; }
.side-search-ic { width: 29px; height: 29px; color: #999; }
.side-search-text { margin-left: 19px; flex: 1; }
.side-group { padding: 0 0 18px 11px; margin-left: -11px; border-bottom: 2px solid #ececec; }
.side-search + .side-group { margin-top: 45px; }
.side-head { height: 53px; display: flex; align-items: center; font-weight: 700; color: #222; margin-left: 11px; }
.side-group + .side-group { padding-top: 19px; }
.side-ic { width: 33px; height: 26px; margin-right: 15px; }
.side-ic-violet { color: #7069ab; }
.side-clock { width: 30px; height: 30px; margin-right: 18px; }
.side-link { display: block; height: 53px; line-height: 53px; margin-left: 11px; white-space: nowrap; }
.side-sub { padding-left: 25px; }

.main { flex: 1; padding: 0 75px 0 84px; min-width: 0; }
.title-row { height: 156px; padding-top: 2px; display: flex; align-items: center; padding-left: 2px; border-bottom: 3px solid #bdbdbd; padding-bottom: 2px; }
.title-ic { width: 64px; height: 50px; color: #8b86b9; }
.title { margin: 0 0 0 18px; font-size: 32px; font-weight: 400; color: #3c7f85; line-height: 40px; }

.form { margin-top: 32px; }
.row { display: grid; grid-template-columns: 560px 1fr; align-items: center; }
.h56 { height: 56px; } .h60 { height: 60px; } .h62 { height: 62px; } .h68 { height: 68px; }
.h72 { height: 72px; } .h74 { height: 74px; } .h128 { height: 128px; } .h268 { height: 268px; }

.lab { padding-left: 4px; line-height: 34px; color: #000; }
.lab-req { font-weight: 700; color: #3a0f35; }
.lab-top-uso { align-self: start; padding-top: 19px; }
.lab-top-desc { align-self: start; padding-top: 13px; }

.val { display: flex; align-items: center; min-width: 0; }
.field { display: flex; align-items: center; height: 52px; padding: 0; border: 0; border-bottom: 2px solid #dedede; border-radius: 0 0 4px 4px; background: transparent; font: inherit; color: #000; outline: 0; position: relative; flex: none; }
.tall { height: 56px; }
.mid { height: 54px; }
.w116 { width: 116px; } .w168 { width: 168px; } .w180 { width: 180px; } .w218 { width: 218px; }
.w326 { width: 326px; } .w328 { width: 328px; } .w998 { width: 998px; } .w1016 { width: 1016px; } .w1680 { width: 1680px; }
.pad10 { padding-left: 9px; }
.pad16 { padding-left: 16px; }

.info { width: 25px; height: 25px; color: #bcbcbc; }
.info-ref { margin-left: 16px; }
.info-op { margin-left: 7px; margin-top: -2px; }

.checks { align-self: start; padding-top: 4px; display: flex; flex-direction: column; }
.check { height: 41.500px; display: flex; align-items: center; white-space: nowrap; }
.check input { width: 26px; height: 26px; margin: -4px 14px 0 2px; accent-color: #4a70e2; }
.check .info { margin-left: 10px; }

.ic-third { width: 25px; height: 29px; color: #7069ab; margin-top: -4px; }
.select-third { margin-left: 15px; padding: 0 12px 0 11px; }
.ph { color: #c8c8c8; }
.ic-plus { width: 30px; height: 30px; margin-left: 17px; color: #0b1a66; }

.caret { display: block; width: 0; height: 0; border-left: 8px solid transparent; border-right: 8px solid transparent; border-top: 10px solid #888; }
.caret-end { margin-left: auto; }
.select-vis { padding-left: 12px; }
.caret-vis { margin-left: 11px; }
.select-op { padding-right: 12px; }
.pct-input { margin-left: 9px; height: 50px; margin-top: -1px; }
.unit { margin-left: 7px; margin-top: -4px; }
.unit-pct { margin-left: 10px; margin-top: -6px; }

.badge { display: inline-block; height: 46px; padding: 0 12px; line-height: 40px; border: 3px solid #cdd0d1; border-bottom-width: 4px; border-radius: 7px; font-size: 28px; font-weight: 700; color: #a9a9a9; }

.ic-cal { width: 24px; height: 24px; margin-left: 4px; }
.date-a { margin: 0 9px 0 12px; color: #999; }
.ic-tag { width: 28px; height: 30px; margin: -8px 15px 0 0; }

.editor { align-self: start; height: 268px; width: 2215px; border: 2px solid #d2d2d2; display: flex; flex-direction: column; }
.toolbar { height: 84px; display: flex; align-items: center; padding-left: 17px; background: #f8f8f8; border-bottom: 2px solid #d2d2d2; color: #474747; font-size: 24px; }
.editor-body { flex: 1; background: #fff; }
.tb { width: 56px; height: 40px; display: flex; align-items: center; justify-content: center; flex: none; }
.tb-ic { width: 28px; height: 28px; }
.tb-off { color: #bcbcbc; }
.tb-flip { transform: scaleX(-1); }
.tb-sep { width: 2px; height: 36px; margin: 0 4px; background: #c4c4c4; flex: none; }
.tb-combo { display: flex; align-items: center; flex: none; height: 40px; }
.tb-combo-font { width: 147px; padding: 0 12px 0 21px; }
.tb-combo-size { width: 144px; padding: 0 13px 0 18px; }
.tb-caret { display: block; margin-left: auto; width: 0; height: 0; border-left: 6px solid transparent; border-right: 6px solid transparent; border-top: 6px solid #474747; }
.tb-b, .tb-i, .tb-u, .tb-s { font-size: 31px; font-weight: 700; line-height: 1; }
.tb-i { font-style: italic; }
.tb-u span, .tb-u { text-decoration: underline; text-decoration-thickness: 2px; text-underline-offset: 3px; }
.tb-s { text-decoration: line-through; text-decoration-thickness: 2px; }
.tb-color { width: 72px; height: 40px; display: flex; align-items: center; padding-left: 13px; flex: none; }
.tb-a { width: 30px; text-align: center; font-size: 31px; font-weight: 700; line-height: 28px; border-bottom: 4px solid #9c9c9c; }
.tb-caret-a { margin-left: 8px; margin-right: 12px; }
.tb-tx { width: 54px; position: relative; }
.tb-t { font-size: 31px; font-weight: 700; font-style: italic; line-height: 1; text-decoration: underline; text-decoration-thickness: 2px; text-underline-offset: 3px; }
.tb-x { font-size: 20px; font-weight: 700; align-self: flex-end; line-height: 14px; }
.tb-source { display: flex; align-items: center; gap: 3px; padding-left: 12px; white-space: nowrap; }
.tb-source .tb-ic { width: 26px; height: 26px; }

.rule { border: 0; margin: 0; height: 3px; background: #bdbdbd; }
.rule-end { margin-top: 32px; }

.actions { margin-top: 66px; display: flex; justify-content: center; gap: 20px; padding-right: 8px; }
.btn { height: 71px; padding: 0 29px; border: 0; border-radius: 5px; background: #97789f; color: #fff; font: 700 30px "Liberation Sans", Arial, sans-serif; text-transform: uppercase; }
```
